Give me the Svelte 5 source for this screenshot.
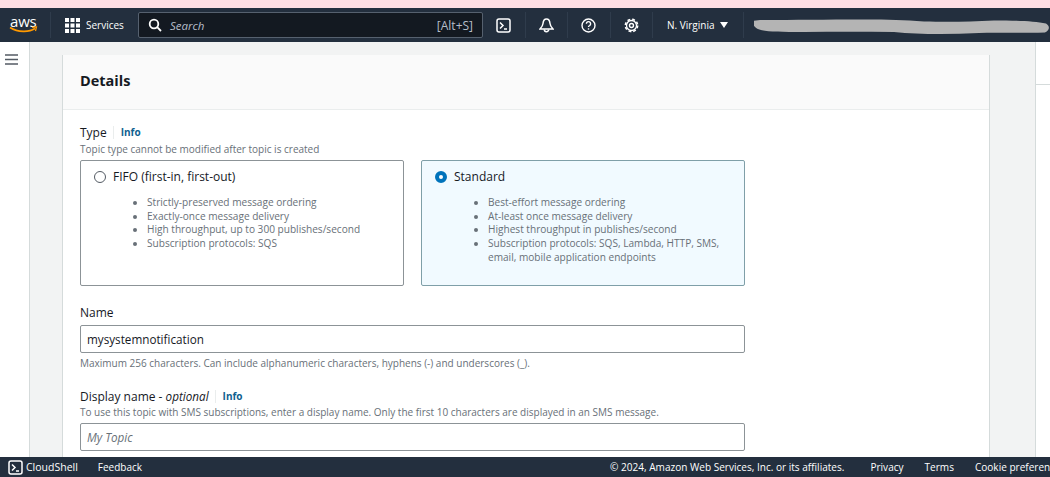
<script>
  const left = ["Strictly-preserved message ordering", "Exactly-once message delivery", "High throughput, up to 300 publishes/second", "Subscription protocols: SQS"];
  const right = ["Best-effort message ordering", "At-least once message delivery", "Highest throughput in publishes/second", "Subscription protocols: SQS, Lambda, HTTP, SMS, email, mobile application endpoints"];
</script>

<div class="page">
  <div class="strip"></div>
  <header class="nav">
    <div class="logo">
      <span class="aws">aws</span>
      <svg width="29" height="7" viewBox="0 0 29 7"><path d="M1 1.500C9 6.500 20 6.500 26 2.500" fill="none" stroke="#f90" stroke-width="1.600"/><path d="M23 1.300 27.500 1l-1 4" fill="none" stroke="#f90" stroke-width="1.200"/></svg>
    </div>
    <div class="services">
      <svg width="15" height="15" viewBox="0 0 15 15" fill="#fff">
        {#each [0, 5.5, 11] as y}
          {#each [0, 5.5, 11] as x}
            <rect x={x} y={y} width="4" height="4" />
          {/each}
        {/each}
      </svg>
      <span>Services</span>
    </div>
    <div class="search">
      <svg width="14" height="14" viewBox="0 0 14 14" fill="none" stroke="#fff" stroke-width="1.800"><circle cx="6" cy="6" r="4.300"/><path d="M9.200 9.200 13 13"/></svg>
      <span class="ph">Search</span>
      <span class="key">[Alt+S]</span>
    </div>
    <div class="tool first">
      <svg width="15" height="15" viewBox="0 0 15 15" fill="none" stroke="#fff" stroke-width="1.500"><rect x="1" y="1" width="13" height="13" rx="2"/><path d="M4 4.500 7 7.500 4 10.500M8 11h3"/></svg>
    </div>
    <div class="tool">
      <svg width="15" height="15" viewBox="0 0 15 15" fill="none" stroke="#fff" stroke-width="1.500"><path d="M7.500 1C5 1 4.200 3 4 5.500 3.800 8 2.500 9.500 1 11h13c-1.500-1.500-2.800-3-3-5.500C10.800 3 10 1 7.500 1Z"/><path d="M5.300 11.500a2.200 2.200 0 0 0 4.400 0"/></svg>
    </div>
    <div class="tool">
      <svg width="15" height="15" viewBox="0 0 15 15" fill="none" stroke="#fff" stroke-width="1.400"><circle cx="7.500" cy="7.500" r="6.500"/><path d="M5.400 5.700a2.100 2.100 0 1 1 3.200 1.800c-.7.400-1.100.9-1.100 1.600"/><path d="M7.500 10.300v1.300"/></svg>
    </div>
    <div class="tool">
      <svg width="15" height="15" viewBox="0 0 15 15" fill="none" stroke="#fff"><circle cx="7.500" cy="7.500" r="2" stroke-width="1.400"/><circle cx="7.500" cy="7.500" r="5" stroke-width="1.300"/><circle cx="7.500" cy="7.500" r="6.200" stroke-width="1.500" stroke-dasharray="2.870 1.990"/></svg>
    </div>
    <div class="region"><span>N. Virginia</span><i></i></div>
    <svg class="account" width="296" height="16" viewBox="0 0 296 16"><path d="M6 1C40 1 70 .5 110 .500 135 .500 150 1 170 2.500 190 3 215 3 240 1.500 260 1.500 280 2 292 4.500 296 7 296 11 291 13.500 270 14 245 13.500 225 14 195 15.500 165 15.500 140 13 110 12.500 80 12.500 50 13 6 13 -1 12 -1 2 6 1Z" fill="#b4b4b4"/></svg>
  </header>

  <div class="body">
    <aside class="side">
      <svg width="13" height="11" viewBox="0 0 13 11" stroke="#545b64" stroke-width="1.500"><path d="M0 1h13M0 5.500h13M0 10h13"/></svg>
    </aside>
    <main class="main">
      <section class="card">
        <h2>Details</h2>
        <div class="content">
          <div class="label"><span>Type</span><a href="#info">Info</a></div>
          <p class="hint">Topic type cannot be modified after topic is created</p>
          <div class="tiles">
            <div class="tile">
              <div class="tile-head"><span class="radio"></span>FIFO (first-in, first-out)</div>
              <ul>
                {#each left as item}<li>{item}</li>{/each}
              </ul>
            </div>
            <div class="tile on">
              <div class="tile-head"><span class="radio"></span>Standard</div>
              <ul>
                {#each right as item}<li>{item}</li>{/each}
              </ul>
            </div>
          </div>
          <div class="label name">Name</div>
          <div class="input">mysystemnotification</div>
          <p class="hint under">Maximum 256 characters. Can include alphanumeric characters, hyphens (-) and underscores (_).</p>
          <div class="label display"><span>Display name - <em>optional</em></span><a href="#info">Info</a></div>
          <p class="hint tight">To use this topic with SMS subscriptions, enter a display name. Only the first 10 characters are displayed in an SMS message.</p>
          <div class="input empty">My Topic</div>
        </div>
      </section>
    </main>
    <div class="rail"><div class="rail-top"></div></div>
  </div>

  <footer class="foot">
    <svg width="15" height="15" viewBox="0 0 15 15" fill="none" stroke="#fff" stroke-width="1.500"><rect x="1" y="1" width="13" height="13" rx="2"/><path d="M4 4.500 7 7.500 4 10.500M8 11h3"/></svg>
    <span class="cs">CloudShell</span>
    <span class="fb">Feedback</span>
    <div class="legal">
      <span>© 2024, Amazon Web Services, Inc. or its affiliates.</span>
      <span class="privacy">Privacy</span>
      <span class="terms">Terms</span>
      <span class="cookie">Cookie preferences</span>
    </div>
  </footer>
</div>

<style>
  :global(body) {
    margin: 0;
  }
  .page {
    width: 1050px;
    height: 477px;
    display: flex;
    flex-direction: column;
    overflow: hidden;
    background: #fff;
    font-family: "Open Sans", "Liberation Sans", sans-serif;
    color: #16191f;
  }
  .strip {
    height: 8px;
    flex: none;
    background: #fddde3;
  }
  .nav {
    height: 34px;
    flex: none;
    background: #232f3e;
    display: flex;
    align-items: center;
    color: #fff;
  }
  .logo {
    width: 51px;
    height: 26px;
    flex: none;
    box-sizing: border-box;
    padding-left: 9px;
    display: flex;
    flex-direction: column;
    border-right: 1px solid #2f3c4c;
  }
  .aws {
    font-size: 15px;
    letter-spacing: -0.2px;
    line-height: 14px;
    margin-top: 2px;
    padding-left: 1px;
  }
  .logo svg {
    margin-top: -2px;
  }
  .services {
    width: 87px;
    flex: none;
    box-sizing: border-box;
    padding-left: 14px;
    display: flex;
    align-items: center;
    gap: 6px;
    font-size: 10px;
    font-weight: 500;
  }
  .search {
    width: 345px;
    height: 26px;
    flex: none;
    box-sizing: border-box;
    padding: 0 9px;
    display: flex;
    align-items: center;
    background: #131921;
    border: 1px solid #56616f;
    border-radius: 2px;
    font-size: 11.500px;
    color: #b6bec9;
  }
  .ph {
    margin-left: 8px;
    font-style: italic;
  }
  .key {
    margin-left: auto;
    font-size: 12px;
  }
  .tool {
    width: 42.500px;
    height: 26px;
    flex: none;
    display: flex;
    align-items: center;
    justify-content: center;
    box-sizing: border-box;
    border-right: 1px solid #2f3c4c;
  }
  .region {
    width: 91px;
    height: 26px;
    flex: none;
    box-sizing: border-box;
    padding-left: 14px;
    display: flex;
    align-items: center;
    gap: 5px;
    font-size: 10px;
    font-weight: 500;
    border-right: 1px solid #2f3c4c;
  }
  .region i {
    width: 0;
    height: 0;
    border-left: 4px solid transparent;
    border-right: 4px solid transparent;
    border-top: 6px solid #fff;
  }
  .account {
    flex: none;
    margin: 4px 0 0 10px;
  }
  .body {
    flex: 1;
    min-height: 0;
    display: flex;
    background: #f2f3f3;
  }
  .side {
    width: 30px;
    flex: none;
    box-sizing: border-box;
    background: #fff;
    border-right: 1px solid #d5dbdb;
    padding: 12px 0 0 5px;
  }
  .side svg {
    display: block;
  }
  .main {
    width: 1005px;
    flex: none;
    box-sizing: border-box;
    padding: 13px 45px 0 32px;
  }
  .rail {
    flex: 1;
    background: #fff;
    border-left: 1px solid #d5dbdb;
  }
  .rail-top {
    height: 42px;
    border-bottom: 1px solid #d5dbdb;
  }
  .card {
    background: #fff;
    border-left: 1px solid #d5dbdb;
    border-right: 1px solid #d5dbdb;
    height: 500px;
  }
  h2 {
    margin: 0;
    height: 55px;
    box-sizing: border-box;
    padding: 15px 17px 0;
    background: #fafafa;
    border-bottom: 1px solid #eaeded;
    font-size: 14.500px;
    line-height: 22px;
    font-weight: 700;
  }
  .content {
    padding: 14px 17px 0;
  }
  .label {
    display: flex;
    align-items: center;
    font-size: 12px;
    line-height: 17px;
  }
  .label em {
    font-size: 11.700px;
  }
  .label a {
    margin-left: 6px;
    padding-left: 7px;
    border-left: 1px solid #eaeded;
    color: #0f5f8f;
    font-size: 10px;
    font-weight: 700;
    text-decoration: none;
    line-height: 13px;
  }
  .hint {
    margin: 1px 0 0;
    font-size: 10px;
    line-height: 15px;
    color: #687078;
  }
  .hint.tight {
    margin-top: 0;
  }
  .tiles {
    display: flex;
    gap: 17px;
    margin-top: 3px;
  }
  .tile {
    width: 324px;
    height: 126px;
    box-sizing: border-box;
    border: 1px solid #8c9397;
    border-radius: 2px;
    padding: 7px 13px;
    font-size: 12px;
  }
  .tile.on {
    border-color: #7f9fa8;
    background: #f1faff;
  }
  .tile-head {
    display: flex;
    align-items: center;
    gap: 7px;
    line-height: 17px;
    color: #16191f;
  }
  .radio {
    width: 12px;
    height: 12px;
    box-sizing: border-box;
    border: 1px solid #545b64;
    border-radius: 50%;
    background: #fff;
  }
  .on .radio {
    border: 4px solid #0073bb;
  }
  ul {
    margin: 11px 0 0;
    padding: 0 0 0 53px;
    font-size: 10.100px;
    line-height: 13.700px;
    color: #687078;
  }
  .name {
    margin-top: 18px;
  }
  .input {
    height: 28px;
    box-sizing: border-box;
    width: 665px;
    margin-top: 4px;
    padding: 0 6px;
    display: flex;
    align-items: center;
    border: 1px solid #8c9397;
    border-radius: 2px;
    font-size: 11.700px;
    color: #16191f;
  }
  .input.empty {
    margin-top: 3px;
    color: #687078;
    font-style: italic;
  }
  .hint.under {
    margin-top: 3px;
  }
  .display {
    margin-top: 17px;
  }
  .foot {
    height: 20px;
    flex: none;
    background: #232f3e;
    display: flex;
    align-items: center;
    padding-left: 8px;
    color: #fff;
    font-size: 10px;
    font-weight: 500;
    white-space: nowrap;
  }
  .foot svg {
    flex: none;
  }
  .cs {
    margin-left: 3px;
    font-size: 10.500px;
  }
  .fb {
    margin-left: 20px;
  }
  .legal {
    flex: none;
    margin-left: 468px;
    display: flex;
    font-size: 10.050px;
  }
  .privacy {
    margin-left: 26px;
  }
  .terms {
    margin-left: 21px;
  }
  .cookie {
    margin-left: 21px;
  }
</style>
